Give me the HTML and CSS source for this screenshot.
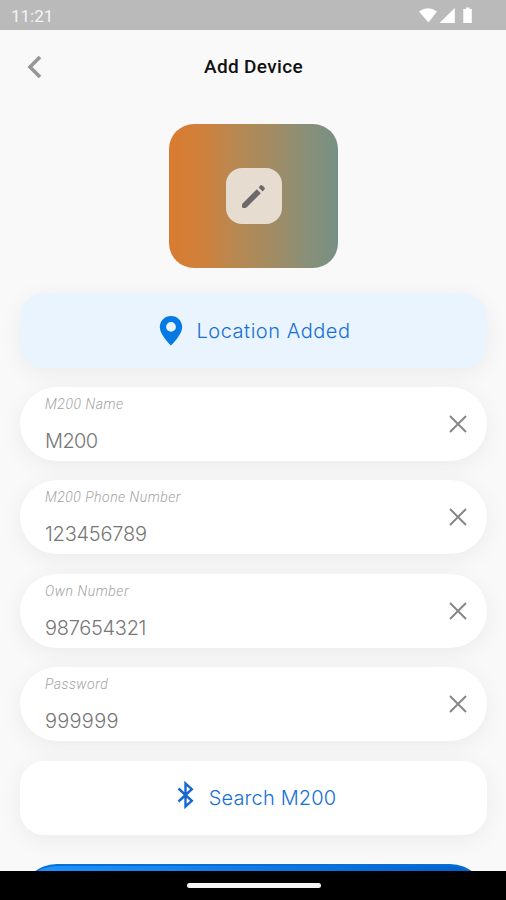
FILE: index.html
```html
<!DOCTYPE html>
<html lang="en">
<head>
<meta charset="utf-8">
<title>Add Device</title>
<link rel="stylesheet" href="styles.css">
</head>
<body>
<div class="screen">
  <div class="status">
    <span class="time">11:21</span>
    <svg class="status-icons" width="56" height="18" viewBox="0 0 56 18">
      <path d="M0 4.500Q9-2 18 4.500L9.500 15.500Z"/>
      <path d="M35.800 1V16H20.500Z"/>
      <path d="M47 .5h3.500v1.500h2.300v14H44.300V2H47z"/>
    </svg>
  </div>
  <header class="bar">
    <svg class="back" width="18" height="24" viewBox="0 0 18 24"><path d="M16 2 6 12l10 10"/></svg>
    <h1>Add Device</h1>
  </header>
  <main>
    <div class="photo">
      <button class="edit" aria-label="Edit">
        <svg width="24" height="24" viewBox="0 0 24 24"><path d="M.8 19.200 14.800 5.200l4 4L4.800 23.200Q4 24 3 24H1.500Q0 24 0 22.500V21Q0 20 .8 19.200zM16.600 3.400l1.800-1.800q1-1 2 0l2 2q1 1 0 2l-1.800 1.800z"/></svg>
      </button>
    </div>
    <div class="card action location">
      <svg width="24" height="32" viewBox="0 0 24 32"><path fill-rule="evenodd" d="M12 1C5.800 1 .8 5.800.8 12c0 8 11.200 18.500 11.200 18.500S23.200 20 23.200 12C23.200 5.800 18.200 1 12 1zm0 6a4.900 4.900 0 1 1 0 9.800 4.900 4.900 0 0 1 0-9.800z"/></svg>
      <span>Location Added</span>
    </div>
    <div class="card field">
      <div><label class="l-name">M200 Name</label><p class="v-name">M200</p></div>
      <svg class="clear" width="18" height="18" viewBox="0 0 18 18"><path d="m1 1 16 16M17 1 1 17"/></svg>
    </div>
    <div class="card field">
      <div><label class="l-phone">M200 Phone Number</label><p class="v-phone">123456789</p></div>
      <svg class="clear" width="18" height="18" viewBox="0 0 18 18"><path d="m1 1 16 16M17 1 1 17"/></svg>
    </div>
    <div class="card field">
      <div><label class="l-own">Own Number</label><p class="v-own">987654321</p></div>
      <svg class="clear" width="18" height="18" viewBox="0 0 18 18"><path d="m1 1 16 16M17 1 1 17"/></svg>
    </div>
    <div class="card field">
      <div><label class="l-pass">Password</label><p class="v-pass">999999</p></div>
      <svg class="clear" width="18" height="18" viewBox="0 0 18 18"><path d="m1 1 16 16M17 1 1 17"/></svg>
    </div>
    <div class="card action search">
      <svg width="17" height="30" viewBox="0 0 17 30"><path d="m1.500 8.500 13.300 12.300-6.300 5.700V3.500l6.300 5.700L1.500 21.500"/></svg>
      <span>Search M200</span>
    </div>
    <div class="submit"></div>
  </main>
  <footer class="nav"><div class="handle"></div></footer>
</div>
</body>
</html>
```

FILE: styles.css
```css
* { box-sizing: border-box; }
body { margin: 0; }
.screen {
  width: 506px; height: 900px; overflow: hidden;
  display: flex; flex-direction: column;
  background: #f9f9f9; font-family: Roboto, sans-serif;
}
.status {
  flex: none; height: 30px; padding: 1px 31px 0 11px;
  display: flex; align-items: center; justify-content: space-between;
  background: #bababa;
}
.time { color: #f4f4f4; font-size: 17px; line-height: 30px; }
.status-icons { fill: #fff; }
.bar {
  flex: none; height: 74px; padding: 0 23px 0 24px;
  display: grid; grid-template-columns: 24px 1fr 24px; align-items: center;
}
.back { fill: none; stroke: #969696; stroke-width: 3.6; }
h1 { margin: 0; text-align: center; font-size: 19px; line-height: 24px; font-weight: 500; letter-spacing: 0.35px; color: #111; }
main {
  flex: 1; min-height: 0; overflow: hidden;
  padding: 19.500px 19px 0 20px;
  display: flex; flex-direction: column; gap: 19.500px;
}
.photo {
  flex: none; align-self: center; width: 169px; height: 144.500px; margin-bottom: 5px;
  display: flex; align-items: center; justify-content: center;
  border-radius: 25px;
  background: linear-gradient(90deg, #d97c30 0%, #cf803c 20%, #b98850 38%, #a38b62 60%, #8b8f77 80%, #779084 100%);
}
.edit {
  width: 56px; height: 56px; padding: 0; border: 0; border-radius: 16px;
  display: flex; align-items: center; justify-content: center;
  background: #e6ddd0;
}
.edit svg { fill: #6d696a; }
.card {
  flex: none; height: 74px; background: #fff;
  display: flex; align-items: center;
  box-shadow: 0 5px 24px rgba(0, 0, 0, 0.06);
}
.action { justify-content: center; border-radius: 24px; font-family: Inter, sans-serif; font-weight: 300; font-size: 20px; color: #1670d6; }
.location { height: 75px; margin-bottom: -0.500px; padding: 1px 0 0 3px; gap: 13px; background: #e9f4ff; }
.location svg { fill: #057ae2; }
.location span { letter-spacing: 0.55px; }
.search { gap: 15px; padding: 1px 0 0 6px; }
.search svg { fill: none; stroke: #1769d0; stroke-width: 2.400; margin-top: -6px; }
.search span { letter-spacing: 0.15px; }
.field { justify-content: space-between; align-items: flex-start; padding: 0 20.500px 0 25px; border-radius: 37px; }
.field label { display: block; margin-top: 8px; font-size: 14px; line-height: 18px; font-style: italic; font-weight: 300; color: #a2a2a2; }
.l-name, .l-own { letter-spacing: 0.55px; }
.l-phone, .l-pass { letter-spacing: 0.5px; }
.field p { margin: 17px 0 0; font-family: Inter, sans-serif; font-size: 20px; line-height: 22px; font-weight: 300; color: #777; }
.v-name { letter-spacing: -0.6px; }
.v-phone { letter-spacing: -0.25px; }
.v-own { letter-spacing: -0.3px; }
.v-pass { letter-spacing: 0.25px; }
.clear { align-self: center; fill: none; stroke: #858585; stroke-width: 1.900; }
.submit { flex: none; margin-top: 10px; height: 74px; border-radius: 37px; background: linear-gradient(90deg, #2094ff, #0260cc); border-top: 2px solid #0870d4; }
.nav { flex: none; height: 29px; background: #000; display: flex; justify-content: center; padding: 12px 0 0 1px; }
.handle { width: 134px; height: 5px; border-radius: 3px; background: #f4f4f4; }
```
